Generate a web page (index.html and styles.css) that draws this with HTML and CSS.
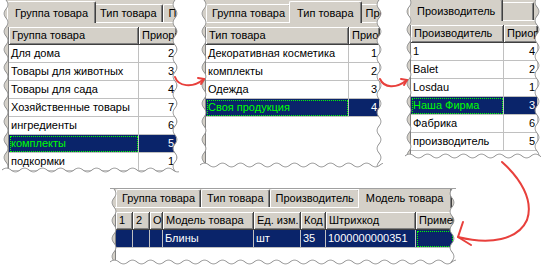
FILE: index.html
```html
<!DOCTYPE html>
<html lang="ru">
<head>
<meta charset="utf-8">
<title>Справочники товара</title>
<link rel="stylesheet" href="styles.css">
</head>
<body>
<svg class="defs" width="0" height="0" aria-hidden="true">
  <defs>
    <pattern id="tearL" patternUnits="userSpaceOnUse" width="7" height="18">
      <path d="M0 0H4C6.5 3 6.5 6 4 9C1.5 12 1.5 15 4 18H0Z" fill="#fff"/>
      <path d="M4 0C6.5 3 6.5 6 4 9C1.5 12 1.5 15 4 18" fill="none" stroke="#8e8e8e" stroke-width="1"/>
    </pattern>
    <pattern id="tearR" patternUnits="userSpaceOnUse" width="7" height="18">
      <path d="M7 0H3C0.5 3 0.5 6 3 9C5.5 12 5.5 15 3 18H7Z" fill="#fff"/>
      <path d="M3 0C0.5 3 0.5 6 3 9C5.5 12 5.5 15 3 18" fill="none" stroke="#8e8e8e" stroke-width="1"/>
    </pattern>
    <pattern id="tearB" patternUnits="userSpaceOnUse" width="18" height="7">
      <path d="M0 7V3C3 0.5 6 0.5 9 3C12 5.5 15 5.5 18 3V7Z" fill="#fff"/>
      <path d="M0 3C3 0.5 6 0.5 9 3C12 5.5 15 5.5 18 3" fill="none" stroke="#8e8e8e" stroke-width="1"/>
    </pattern>
  </defs>
</svg>

<main class="stage">

  <section class="panel p1">
    <div class="tabs">
      <span class="tab active">Группа товара</span>
      <span class="tab">Тип товара</span>
      <span class="tab">Производитель</span>
    </div>
    <div class="sheet">
      <div class="grid">
        <div class="row head"><span class="c a">Группа товара</span><span class="c b">Приоритет</span></div>
        <div class="row"><span class="c a">Для дома</span><span class="c b num">2</span></div>
        <div class="row"><span class="c a">Товары для животных</span><span class="c b num">3</span></div>
        <div class="row"><span class="c a">Товары для сада</span><span class="c b num">4</span></div>
        <div class="row"><span class="c a">Хозяйственные товары</span><span class="c b num">7</span></div>
        <div class="row"><span class="c a">ингредиенты</span><span class="c b num">6</span></div>
        <div class="row sel"><span class="c a focus">комплекты</span><span class="c b num">5</span></div>
        <div class="row"><span class="c a">подкормки</span><span class="c b num">1</span></div>
      </div>
    </div>
    <svg class="tear left"><rect width="100%" height="100%" fill="url(#tearL)"/></svg>
    <svg class="tear right"><rect width="100%" height="100%" fill="url(#tearR)"/></svg>
    <svg class="tear bottom"><rect width="100%" height="100%" fill="url(#tearB)"/></svg>
  </section>

  <section class="panel p2">
    <div class="tabs">
      <span class="tab">Группа товара</span>
      <span class="tab active">Тип товара</span>
      <span class="tab">Производитель</span>
    </div>
    <div class="sheet">
      <div class="grid">
        <div class="row head"><span class="c a">Тип товара</span><span class="c b">Приоритет</span></div>
        <div class="row"><span class="c a">Декоративная косметика</span><span class="c b num">1</span></div>
        <div class="row"><span class="c a">комплекты</span><span class="c b num">2</span></div>
        <div class="row"><span class="c a">Одежда</span><span class="c b num">3</span></div>
        <div class="row sel"><span class="c a focus">Своя продукция</span><span class="c b num">4</span></div>
      </div>
    </div>
    <svg class="tear left"><rect width="100%" height="100%" fill="url(#tearL)"/></svg>
    <svg class="tear right"><rect width="100%" height="100%" fill="url(#tearR)"/></svg>
    <svg class="tear bottom"><rect width="100%" height="100%" fill="url(#tearB)"/></svg>
  </section>

  <section class="panel p3">
    <div class="tabs">
      <span class="tab active">Производитель</span>
      <span class="tab blank"></span>
    </div>
    <div class="sheet">
      <div class="grid">
        <div class="row head"><span class="c a">Производитель</span><span class="c b">Приоритет</span></div>
        <div class="row"><span class="c a">1</span><span class="c b num">4</span></div>
        <div class="row"><span class="c a">Balet</span><span class="c b num">2</span></div>
        <div class="row"><span class="c a">Losdau</span><span class="c b num">1</span></div>
        <div class="row sel"><span class="c a focus">Наша Фирма</span><span class="c b num">3</span></div>
        <div class="row"><span class="c a">Фабрика</span><span class="c b num">6</span></div>
        <div class="row"><span class="c a">производитель</span><span class="c b num">5</span></div>
      </div>
    </div>
    <svg class="tear left"><rect width="100%" height="100%" fill="url(#tearL)"/></svg>
    <svg class="tear right"><rect width="100%" height="100%" fill="url(#tearR)"/></svg>
    <svg class="tear bottom"><rect width="100%" height="100%" fill="url(#tearB)"/></svg>
  </section>

  <section class="panel p4">
    <div class="tabs">
      <span class="tab">Группа товара</span>
      <span class="tab">Тип товара</span>
      <span class="tab">Производитель</span>
      <span class="tab active">Модель товара</span>
    </div>
    <div class="sheet">
      <div class="grid">
        <div class="row head">
          <span class="c k1">1</span><span class="c k2">2</span><span class="c k3">О</span><span class="c k4">Модель товара</span><span class="c k5">Ед. изм.</span><span class="c k6">Код</span><span class="c k7">Штрихкод</span><span class="c k8">Примечание</span>
        </div>
        <div class="row sel">
          <span class="c k1"></span><span class="c k2"></span><span class="c k3"></span><span class="c k4">Блины</span><span class="c k5">шт</span><span class="c k6">35</span><span class="c k7">1000000000351</span><span class="c k8 focus"></span>
        </div>
      </div>
    </div>
    <svg class="tear left"><rect width="100%" height="100%" fill="url(#tearL)"/></svg>
    <svg class="tear right"><rect width="100%" height="100%" fill="url(#tearR)"/></svg>
    <svg class="tear bottom"><rect width="100%" height="100%" fill="url(#tearB)"/></svg>
  </section>

  <svg class="arrows" width="541" height="272" viewBox="0 0 541 272" aria-hidden="true">
    <g fill="none" stroke="#e8403c" stroke-width="2" stroke-linecap="round" stroke-linejoin="round">
      <path d="M175 77C178 86 192 89 204 79"/>
      <path d="M198 78L204 79L201 84"/>
      <path d="M380 79C384 88 396 89 407 80"/>
      <path d="M401 79L407 80L404 85"/>
      <path d="M502 162C520 178 534 200 527 220C518 240 490 245 458 237"/>
      <path d="M463 222L458 237L471 245"/>
    </g>
  </svg>
</main>
</body>
</html>
```

FILE: styles.css
```css
* { box-sizing: border-box; }

html, body { margin: 0; padding: 0; }

body {
  width: 541px;
  height: 272px;
  overflow: hidden;
  background: #fff;
  color: #000;
  font-family: "Liberation Sans", Arial, sans-serif;
  font-size: 11px;
}

.defs { position: absolute; width: 0; height: 0; }

.stage {
  position: relative;
  width: 541px;
  height: 272px;
}

/* torn screenshot fragments placed on the canvas */
.panel {
  position: absolute;
  overflow: hidden;
  display: flex;
  flex-direction: column;
  background: #d4d0c8;
}

.p1 { left: 2px; top: 0; width: 177px; height: 174px; padding-left: 6px; }
.p2 { left: 200px; top: 0; width: 183px; height: 169px; padding-left: 5px; }
.p3 { left: 405px; top: -2px; width: 136px; height: 162px; padding-left: 5px; }
.p4 { left: 110px; top: 188px; width: 346px; height: 78px; padding-left: 5px; border-top: 1px solid #a0a0a0; }

/* tab strip */
.tabs {
  flex: none;
  display: flex;
  align-items: flex-end;
  height: 22px;
  padding-left: 1px;
}
.p4 .tabs { height: 18px; }

.tab {
  flex: none;
  height: 18px;
  padding: 0 5px;
  line-height: 17px;
  white-space: nowrap;
  border-top: 1px solid #fff;
  border-left: 1px solid #fff;
  border-right: 1px solid #404040;
  border-radius: 2px 2px 0 0;
  box-shadow: inset -1px 0 #808080;
}

.tab.active {
  position: relative;
  z-index: 2;
  height: 22px;
  margin: 0 -2px -1px;
  padding: 2px 7px 0;
  line-height: 18px;
  background: #d4d0c8;
}

.tab.blank { width: 33px; }

/* tab page */
.sheet {
  flex: 1;
  display: flex;
  flex-direction: column;
  border-top: 1px solid #fff;
  padding-top: 4px;
}

.grid {
  flex: 1;
  background: #fff;
  border-left: 1px solid #808080;
}

.row {
  display: flex;
  height: 18px;
}

.c {
  flex: none;
  height: 18px;
  padding: 0 2px;
  line-height: 17px;
  white-space: nowrap;
  overflow: hidden;
  border-right: 1px solid #c0c0c0;
  border-bottom: 1px solid #c0c0c0;
}

.num { text-align: right; }

.head .c {
  background: #d4d0c8;
  border-right-color: #404040;
  border-bottom-color: #404040;
  box-shadow: inset 1px 1px #fff, inset -1px -1px #808080;
  padding-left: 3px;
  line-height: 16px;
}

.sel .c {
  background: #0a246a;
  color: #fff;
}

.sel .focus {
  color: #00ff00;
  outline: 1px dotted #00ff00;
  outline-offset: -2px;
}

/* column widths */
.p1 .a { width: 130px; }
.p1 .b { width: 38px; }
.p2 .a { width: 143px; }
.p2 .b { width: 31px; }
.p3 .a { width: 93px; }
.p3 .b { width: 34px; }

.k1 { width: 17px; }
.k2 { width: 17px; }
.k3 { width: 13px; }
.k4 { width: 91px; }
.k5 { width: 47px; }
.k6 { width: 25px; }
.k7 { width: 90px; }
.k8 { width: 38px; }

/* torn edges */
.tear { position: absolute; z-index: 3; }
.tear.left { left: 0; top: 0; width: 7px; height: 100%; }
.tear.right { right: 0; top: 0; width: 7px; height: 100%; }
.tear.bottom { left: 0; bottom: 0; width: 100%; height: 7px; }

.arrows {
  position: absolute;
  left: 0;
  top: 0;
  z-index: 5;
  pointer-events: none;
}
```
